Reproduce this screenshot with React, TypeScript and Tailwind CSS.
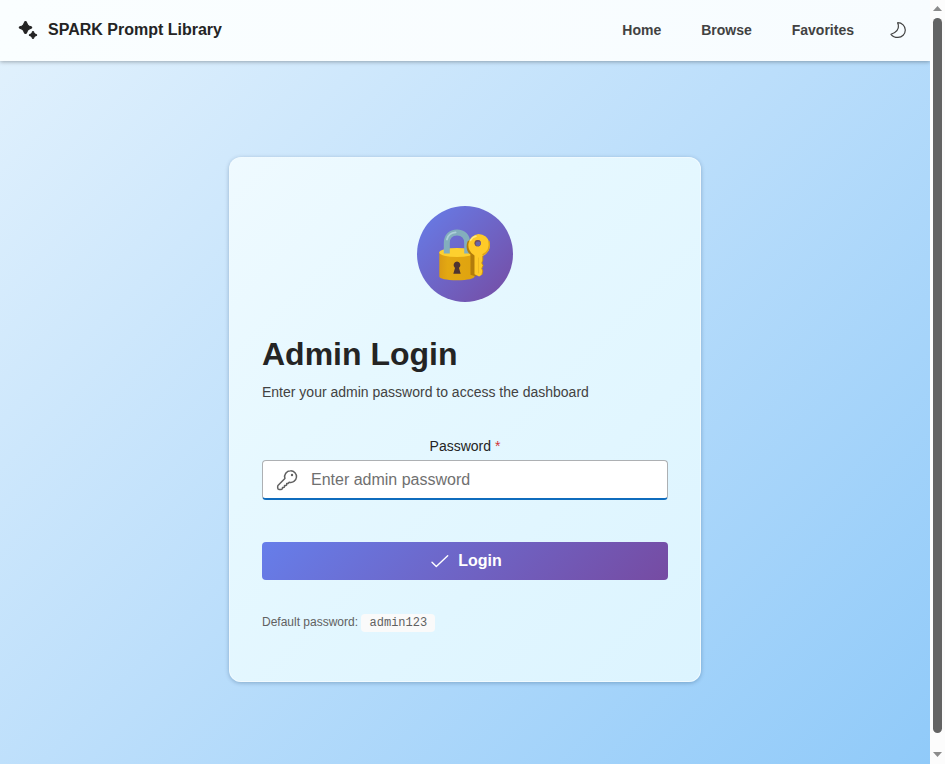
import React from "react";

function Sparkles() {
  return (
    <svg width="20" height="20" viewBox="0 0 20 20" fill="#242424" stroke="#242424" strokeWidth="1.200" strokeLinejoin="round">
      <path d="M7.500 1.600c.5 0 .8.300 1 .8l.9 2c.3.800.8 1.300 1.500 1.600l2.100.8c.5.200.7.300.7.700s-.2.600-.7.800l-2.100.8c-.7.300-1.200.8-1.500 1.600l-.9 2c-.2.500-.5.700-1 .7s-.8-.2-1-.7l-.9-2c-.3-.8-.8-1.300-1.500-1.600L2 8.300c-.5-.2-.7-.4-.7-.8s.2-.5.700-.7L4.100 6c.7-.3 1.200-.8 1.500-1.600l.9-2c.2-.5.500-.8 1-.8Z" />
      <path d="M15 11.500c.3 0 .5.200.6.400l.4 1.100c.2.500.6.900 1.100 1.100l1.100.4c.3.100.4.300.4.500s-.1.400-.4.500l-1.100.5c-.5.200-.9.600-1.100 1.100l-.4 1c-.1.300-.3.400-.6.400s-.5-.1-.6-.4l-.4-1c-.2-.5-.6-.9-1.100-1.100l-1.100-.5c-.3-.1-.4-.3-.4-.5s.1-.4.4-.5l1.100-.4c.5-.2.900-.6 1.100-1.100l.4-1.100c.1-.2.300-.4.600-.4Z" />
    </svg>
  );
}

function Moon() {
  return (
    <svg width="20" height="20" viewBox="0 0 20 20" fill="none" stroke="#424242" strokeWidth="1.200" strokeLinejoin="round">
      <path d="M9.700 2.700C14 2.700 17.300 6 17.300 10.100C17.300 14.200 14 17.400 10 17.400C7 17.400 4.400 16.200 3 14.300C7.900 12.600 10.900 9.200 10.400 5.400C10.300 4.300 9.600 3.600 9.700 2.700Z" />
    </svg>
  );
}

function Key() {
  return (
    <svg width="24" height="24" viewBox="0 0 24 24" fill="none" stroke="#616161" strokeWidth="1.500" strokeLinejoin="round" strokeLinecap="round">
      <path d="M15.500 2.800a5.800 5.800 0 1 1-1.300 11.400l-.9.900c-.2.200-.4.300-.7.300h-.9v1.200c0 .4-.3.800-.8.800H9.500v1.200c0 .4-.3.800-.8.800H7.500v.7c0 .8-.6 1.300-1.300 1.300H4c-.8 0-1.300-.6-1.300-1.300v-1.800c0-.4.200-.8.500-1.100l6.700-6.700a5.900 5.900 0 0 1 5.600-7.700Z" />
      <circle cx="17" cy="7" r="1.200" fill="#616161" stroke="none" />
    </svg>
  );
}

function LockWithKey() {
  return (
    <svg width="96" height="96" viewBox="0 0 96 96" fill="none" role="img">
      <defs>
        <linearGradient id="lockBody" x1="22" y1="0" x2="57" y2="0" gradientUnits="userSpaceOnUse">
          <stop offset="0" stopColor="#d99a14" />
          <stop offset="0.250" stopColor="#e3a812" />
          <stop offset="1" stopColor="#dfa30f" />
        </linearGradient>
      </defs>
      <path d="M22.300 46v24.500C22.300 72.500 29 74.300 40 74.300s17.500-1.800 17.500-3.800V46Z" fill="url(#lockBody)" />
      <ellipse cx="39.900" cy="46.500" rx="17.600" ry="4.500" fill="#fdd02f" />
      <path d="M29.800 47.500V37c0-6.800 4.200-10.500 10.200-10.500S50.200 30.200 50.200 37v10.500" stroke="#83aebd" strokeWidth="6" />
      <path d="M29.900 33.500c1-4 4.300-6.800 8.700-7.100" stroke="#add0da" strokeWidth="1.800" strokeLinecap="round" />
      <path d="M40 55.600a3.500 3.500 0 0 1 2 6.300l1.700 5.800h-7.400l1.700-5.800a3.500 3.500 0 0 1 2-6.300Z" fill="#4e3431" />
      <path d="M53.500 48.500C49.300 45.500 48.800 40 50.500 35.500L59 29l5 20-5 21.500-5.500-1.800Z" fill="#b27c0b" />
      <path fillRule="evenodd" d="M61.500 27.900a11.500 11.500 0 0 1 4.300 22.100v4.200l-1 2.900 1.300 2.300-1.300 3.100 1 2.500-.9 3.800-2.800 1.700-4.600-2.200V49.500a11.500 11.500 0 0 1 4-21.600Zm-.8 6.200a3.100 3.100 0 1 0 0 6.200 3.100 3.100 0 0 0 0-6.200Z" fill="#ffca28" />
      <path d="m65.800 50 0 4.200-1 2.900 1.300 2.300-1.300 3.100 1 2.500-.9 3.800" stroke="#c88d12" strokeWidth="0.900" />
      <circle cx="60.700" cy="37.200" r="3.100" fill="#735060" />
      <circle cx="61.100" cy="37.800" r="2.400" fill="#6866ab" />
      <path d="M71.900 35c1.700 6.100-1 11.700-6.400 14" stroke="#dda31a" strokeWidth="1.400" />
      <path d="M61.500 52V67" stroke="#edb71f" strokeWidth="0.900" strokeLinecap="round" />
      <path d="M53.500 34.500c1.100-2.400 3-3.900 5.500-4.300" stroke="#ffe980" strokeWidth="1.600" strokeLinecap="round" />
    </svg>
  );
}

export default function App() {
  return (
    <div className="flex h-[764px] w-full overflow-hidden font-['Liberation_Sans',Arial,sans-serif] text-[#242424]">
      <div className="flex min-w-0 flex-1 flex-col bg-[linear-gradient(135deg,#e3f2fd_0%,#bbdefb_50%,#90caf9_100%)]">
        <header className="flex h-[61px] shrink-0 items-center justify-between bg-[linear-gradient(100deg,#fafeff,#f7fcff)] pr-[22px] pb-px pl-[18px] shadow-[0_1px_4px_rgba(0,0,0,0.3)]">
          <div className="flex items-center gap-[10px]">
            <Sparkles />
            <span className="text-base leading-[22px] font-bold">SPARK Prompt Library</span>
          </div>
          <nav className="flex items-center text-sm leading-5 font-bold text-[#424242]">
            <a className="mr-10">Home</a>
            <a className="mr-10">Browse</a>
            <a className="mr-[34px]">Favorites</a>
            <Moon />
          </nav>
        </header>
        <main className="flex justify-center pt-24">
          <section className="flex h-[525px] w-[472px] flex-col rounded-xl border border-[#f4fbff]/80 bg-[linear-gradient(135deg,#effaff_0%,#e6f8ff_35%,#dcf4ff_100%)] px-8 pt-12 shadow-[0_1px_4px_rgba(0,40,80,0.28)]">
            <div className="size-24 shrink-0 self-center rounded-full bg-[linear-gradient(135deg,#667eea,#764ba2)]">
              <LockWithKey />
            </div>
            <h1 className="mt-8 text-[32px] leading-10 font-bold">Admin Login</h1>
            <p className="mt-2 text-sm leading-5 text-[#424242]">Enter your admin password to access the dashboard</p>
            <label className="mt-[34px] self-center text-sm leading-5">Password <span className="text-[#d13438]">*</span></label>
            <div className="mt-1 flex h-10 shrink-0 items-center overflow-hidden rounded border border-b-2 border-[#adb0b3] border-b-[#0f6cbd] bg-white pl-3">
              <Key />
              <span className="ml-3 text-base leading-[22px] text-[#707070]">Enter admin password</span>
            </div>
            <button className="mt-[42px] flex h-[38px] shrink-0 items-center justify-center rounded bg-[linear-gradient(135deg,#667eea,#764ba2)] text-base font-bold text-white">
              <svg width="24" height="24" viewBox="0 0 24 24" fill="none" stroke="currentColor" strokeWidth="1.400" strokeLinecap="round" strokeLinejoin="round" className="mr-1.5">
                <path d="M4 13.300 8.300 17.600 19.700 6.700" />
              </svg>
              Login
            </button>
            <div className="mt-[34px] flex items-start text-xs leading-4 text-[#616161]">
              Default password:
              <code className="ml-[3px] h-[18px] rounded bg-[#fafafa] pr-[7.500px] pl-[8.500px] font-['Liberation_Mono',monospace] text-xs leading-[18px]">admin123</code>
            </div>
          </section>
        </main>
      </div>
      <aside className="flex w-[15px] shrink-0 flex-col items-center bg-[#fcfcfc] pt-1.5">
        <svg width="9" height="5" viewBox="0 0 9 5" fill="#8b8b8b"><path d="M0 5 4.500 0 9 5Z" /></svg>
        <div className="mt-[7px] h-[715px] w-[9px] rounded-full bg-[#636363]" />
        <svg width="9" height="5" viewBox="0 0 9 5" fill="#8b8b8b" className="mt-[19px]"><path d="M0 0h9L4.500 5Z" /></svg>
      </aside>
    </div>
  );
}
